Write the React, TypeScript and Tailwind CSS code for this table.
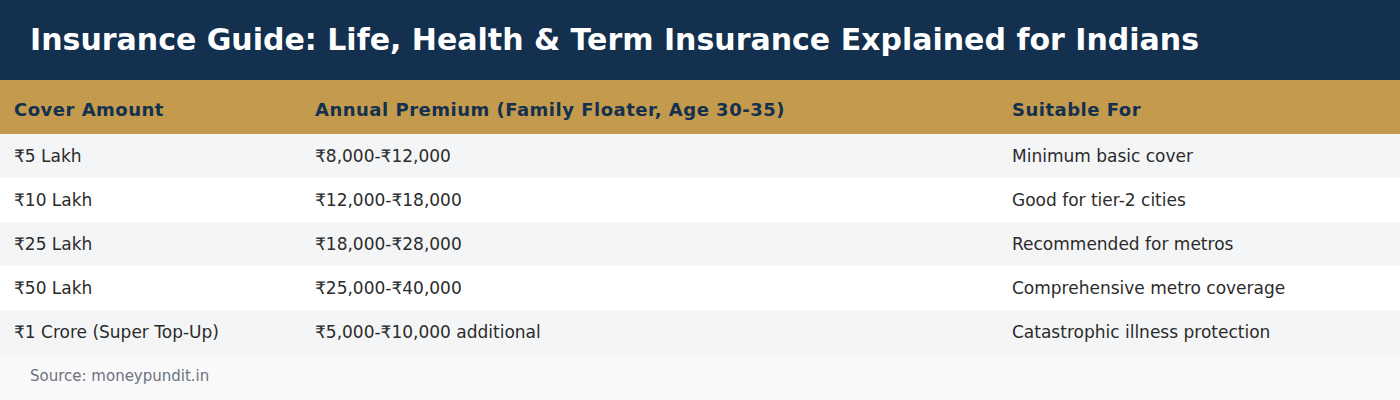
import React from 'react';

const rows = [
  ['₹5 Lakh', '₹8,000-₹12,000', 'Minimum basic cover'],
  ['₹10 Lakh', '₹12,000-₹18,000', 'Good for tier-2 cities'],
  ['₹25 Lakh', '₹18,000-₹28,000', 'Recommended for metros'],
  ['₹50 Lakh', '₹25,000-₹40,000', 'Comprehensive metro coverage'],
  ['₹1 Crore (Super Top-Up)', '₹5,000-₹10,000 additional', 'Catastrophic illness protection'],
];

export default function App() {
  return (
    <div className="w-[1400px] h-[400px] bg-white font-['DejaVu_Sans',sans-serif]">
      <div className="h-20 bg-[#13304f] px-[30px] flex items-center">
        <h1 className="text-[30px] font-bold text-white leading-none">
          Insurance Guide: Life, Health &amp; Term Insurance Explained for Indians
        </h1>
      </div>
      <div className="grid grid-cols-[301px_697px_1fr] h-[54px] bg-[#c49a4c] items-center pt-1 text-[18px] tracking-[0.5px] font-bold text-[#13304f]">
        <div className="px-[14px]">Cover Amount</div>
        <div className="px-[14px]">Annual Premium (Family Floater, Age 30-35)</div>
        <div className="px-[14px]">Suitable For</div>
      </div>
      {rows.map((r, i) => (
        <div
          key={i}
          className={`grid grid-cols-[301px_697px_1fr] h-11 items-center pt-0.5 text-[17px] text-[#2b2b2b] ${i % 2 === 0 ? 'bg-[#f4f5f7]' : 'bg-white'}`}
        >
          {r.map((c, j) => (
            <div key={j} className="px-[14px]">{c}</div>
          ))}
        </div>
      ))}
      <div className="h-[46px] bg-[#f9f9f9] px-[30px] flex items-center pb-0.5 text-[15px] text-[#6b7280]">
        Source: moneypundit.in
      </div>
    </div>
  );
}
